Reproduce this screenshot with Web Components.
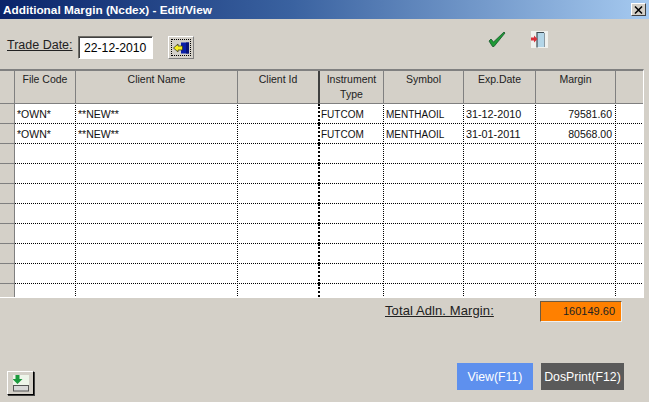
<!DOCTYPE html>
<html>
<head>
<meta charset="utf-8">
<title>Additional Margin</title>
<style>
  html, body { margin: 0; padding: 0; background: #d4d0c8; }
  body { font-family: "Liberation Sans", Arial, sans-serif; width: 649px; height: 402px; overflow: hidden; }
</style>
</head>
<body>
<margin-window>
  <title-bar slot="title">Additional Margin (Ncdex) - Edit/View</title-bar>
  <trade-toolbar slot="toolbar"></trade-toolbar>
  <margin-grid slot="grid"></margin-grid>
  <total-row slot="total"></total-row>
  <action-bar slot="actions"></action-bar>
</margin-window>

<script>
class MarginWindow extends HTMLElement {
  constructor() {
    super();
    this.attachShadow({ mode: 'open' });
    this.shadowRoot.innerHTML = `
      <style>
        :host { display: flex; flex-direction: column; width: 649px; height: 402px; background: #d4d0c8; color: #000; }
      </style>
      <slot name="title"></slot>
      <slot name="toolbar"></slot>
      <slot name="grid"></slot>
      <slot name="total"></slot>
      <slot name="actions"></slot>
    `;
  }
}

class TitleBar extends HTMLElement {
  constructor() {
    super();
    this.attachShadow({ mode: 'open' });
    this.shadowRoot.innerHTML = `
      <style>
        :host {
          display: flex; align-items: center; justify-content: space-between;
          box-sizing: border-box; height: 19px; padding: 0 3px 0 3px;
          background: linear-gradient(90deg, #0a246a 0%, #3a62a0 45%, #a6caf0 100%);
          color: #fff; font: bold 11.8px "Liberation Sans", Arial, sans-serif; white-space: nowrap;
        }
        .close {
          display: flex; align-items: center; justify-content: center;
          box-sizing: border-box; width: 15px; height: 13px;
          background: #d4d0c8; border: 1px solid; border-color: #fff #404040 #404040 #fff;
        }
      </style>
      <span><slot></slot></span>
      <span class="close">
        <svg width="9" height="8" viewBox="0 0 9 8"><path d="M1 0.5 8 7.5M8 0.5 1 7.5" stroke="#000" stroke-width="1.5" fill="none"/></svg>
      </span>
    `;
  }
}

class TradeToolbar extends HTMLElement {
  constructor() {
    super();
    this.attachShadow({ mode: 'open' });
    this.shadowRoot.innerHTML = `
      <style>
        :host { display: flex; box-sizing: border-box; height: 50px; padding: 13px 0 0 7px; font-size: 12.5px; }
        .label { text-decoration: underline; width: 71px; padding-top: 6px; color: #222; white-space: nowrap; }
        .date {
          box-sizing: border-box; width: 75px; height: 23px; line-height: 22px; padding-left: 5px; margin-top: 4px;
          background: #fff; border: 1px solid; border-color: #6e6c66 #fff #fff #6e6c66; white-space: nowrap;
          box-shadow: inset 1px 1px 0 #404040; font-size: 12.2px;
        }
        .back {
          display: flex; align-items: center; justify-content: center;
          box-sizing: border-box; width: 26px; height: 23px; margin: 4px 0 0 15px;
          border: 1px solid; border-color: #fff #808080 #808080 #fff;
          outline: 1px dotted #000; outline-offset: -4px;
        }
        .spacer { width: 294px; }
        .icon { width: 18px; height: 16px; margin-top: -1px; }
        .door { margin-left: 24px; }
      </style>
      <span class="label">Trade Date:</span>
      <span class="date">22-12-2010</span>
      <span class="back">
        <svg width="16" height="12" viewBox="0 0 16 12">
          <rect x="8" y="0.5" width="8" height="11" fill="#0a1fa8"/>
          <rect x="13" y="0.5" width="3" height="11" fill="#081478"/>
          <path d="M0.5 6 5 2V4H9.5V8H5V10Z" fill="#f6ee20" stroke="#3a3a20" stroke-width="0.8"/>
        </svg>
      </span>
      <span class="spacer"></span>
      <svg class="icon" viewBox="0 0 18 16">
        <path d="M1 10 3 8 5.5 11 16 1 17 2 6 15.5H4.5Z" fill="#1f9a36" stroke="#14552a" stroke-width="0.8"/>
      </svg>
      <svg class="icon door" viewBox="0 0 18 17" style="height:17px">
        <rect x="1" y="0" width="17" height="17" fill="#f0f1ee"/>
        <path d="M7 1.5H14.5V16H7Z" fill="#b4d6e8"/>
        <path d="M7 16.5V1.5H14" fill="none" stroke="#3c4a50" stroke-width="1.2"/>
        <path d="M14.5 2V16" stroke="#8a9aa4" stroke-width="1"/>
        <path d="M1 6.5H4V4.5L7.5 8 4 11.5V9.5H1Z" fill="#d8303a"/>
      </svg>
    `;
  }
}

const COLS = [14, 61, 162, 81, 65, 80, 72, 80, 28];
const ROWS = [
  ['*OWN*', '**NEW**', '', 'FUTCOM', 'MENTHAOIL', '31-12-2010', '79581.60', ''],
  ['*OWN*', '**NEW**', '', 'FUTCOM', 'MENTHAOIL', '31-01-2011', '80568.00', ''],
];
const HEADS = ['File Code', 'Client Name', 'Client Id', 'Instrument<br>Type', 'Symbol', 'Exp.Date', 'Margin', ''];
const CELL_CLASS = ['first', '', '', 'heavy caps', 'caps', 'date', 'num', ''];

class MarginGrid extends HTMLElement {
  constructor() {
    super();
    this.attachShadow({ mode: 'open' });
    const tracks = COLS.map(c => c + 'px').join(' ');
    let html = '<div class="head corner"></div>';
    HEADS.forEach((h, i) => {
      html += `<div class="head${i === 3 ? ' heavy' : ''}">${h}</div>`;
    });
    for (let r = 0; r < 10; r++) {
      const data = ROWS[r] || [];
      html += '<div class="stub"></div>';
      for (let c = 0; c < 8; c++) {
        html += `<div class="cell ${CELL_CLASS[c]}">${data[c] || ''}</div>`;
      }
    }
    this.shadowRoot.innerHTML = `
      <style>
        :host { display: block; box-sizing: border-box; width: 644px; height: 229px; font-size: 10.5px; overflow: hidden; border-top: 2px solid #808080; border-right: 1px solid #fff; border-bottom: 1px solid #fff; }
        .grid { display: grid; grid-template-columns: ${tracks}; grid-template-rows: 33px repeat(10, 20px); width: 643px; }
        .grid > div { box-sizing: border-box; white-space: nowrap; overflow: hidden; }
        .head { background: #d4d0c8; text-align: center; padding-top: 1px; line-height: 15px; color: #222; border-left: 1px solid #808080; border-bottom: 1px solid #808080; }
        .corner { border-left: 0; }
        .stub { background: #d4d0c8; border-bottom: 1px solid #808080; }
        .cell {
          background-color: #fff; line-height: 21px; padding-left: 3px; color: #111;
          background-image:
            repeating-linear-gradient(90deg, #000 0 1px, transparent 1px 2px),
            repeating-linear-gradient(0deg, #000 0 1px, transparent 1px 2px);
          background-size: 100% 1px, 1px 100%;
          background-position: 0 100%, 0 0;
          background-repeat: no-repeat;
        }
        .grid > .first { border-left: 1px solid #808080; padding-left: 2px; background-size: 100% 1px, 0 0; }
        .grid > .head.heavy { border-left: 2px solid #404040; }
        .grid > .cell.heavy { border-left: 2px dotted #000; padding-left: 1px; background-size: 100% 1px, 0 0; }
        .caps { font-size: 10px; }
        .date { font-size: 10.8px; }
        .num { text-align: right; padding-right: 3px; }
      </style>
      <div class="grid">${html}</div>
    `;
  }
}

class TotalRow extends HTMLElement {
  constructor() {
    super();
    this.attachShadow({ mode: 'open' });
    this.shadowRoot.innerHTML = `
      <style>
        :host { display: flex; box-sizing: border-box; height: 29px; padding: 3px 0 0 385px; font-size: 13px; letter-spacing: 0.1px; }
        .label { width: 155px; text-decoration: underline; padding-top: 2px; color: #222; white-space: nowrap; }
        .value {
          box-sizing: border-box; width: 82px; height: 21px; line-height: 19px; text-align: right; padding-right: 6px;
          background: #ff8000; border: 1px solid; border-color: #6e5a40 #eee #eee #6e5a40; font-size: 11px; letter-spacing: 0; color: #222;
        }
      </style>
      <span class="label">Total Adln. Margin:</span>
      <span class="value">160149.60</span>
    `;
  }
}

class ActionBar extends HTMLElement {
  constructor() {
    super();
    this.attachShadow({ mode: 'open' });
    this.shadowRoot.innerHTML = `
      <style>
        :host { display: flex; align-items: flex-start; box-sizing: border-box; padding: 36px 0 0 7px; font-size: 12.3px; color: #fff; }
        .save {
          display: flex; align-items: center; justify-content: center;
          box-sizing: border-box; width: 27px; height: 24px; margin-top: 8px;
          border: 1px solid; border-color: #fff #000 #000 #fff;
          box-shadow: 1px 1px 0 #404040;
        }
        .spacer { width: 423px; }
        .btn { display: flex; align-items: center; justify-content: center; height: 27px; white-space: nowrap; }
        .view { width: 76px; background: #5e90ee; margin-right: 8px; }
        .dos { width: 83px; background: #5a5a5a; }
      </style>
      <span class="save">
        <svg width="16" height="17" viewBox="0 0 16 17">
          <rect x="0" y="0" width="16" height="10" fill="#eef5ea"/>
          <path d="M2.5 0H6.5V4H9.5L4.5 9 -0.5 4H2.5Z" fill="#1c9a3e"/>
          <rect x="0.5" y="10.5" width="15" height="5.5" fill="#d8d8d8" stroke="#555"/>
        </svg>
      </span>
      <span class="spacer"></span>
      <span class="btn view">View(F11)</span>
      <span class="btn dos">DosPrint(F12)</span>
    `;
  }
}

customElements.define('margin-window', MarginWindow);
customElements.define('title-bar', TitleBar);
customElements.define('trade-toolbar', TradeToolbar);
customElements.define('margin-grid', MarginGrid);
customElements.define('total-row', TotalRow);
customElements.define('action-bar', ActionBar);
</script>
</body>
</html>
